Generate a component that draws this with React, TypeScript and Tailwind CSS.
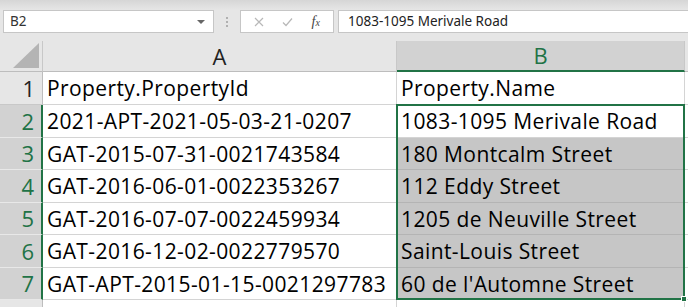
import React from "react";

const rows = [
  ["Property.PropertyId", "Property.Name"],
  ["2021-APT-2021-05-03-21-0207", "1083-1095 Merivale Road"],
  ["GAT-2015-07-31-0021743584", "180 Montcalm Street"],
  ["GAT-2016-06-01-0022353267", "112 Eddy Street"],
  ["GAT-2016-07-07-0022459934", "1205 de Neuville Street"],
  ["GAT-2016-12-02-0022779570", "Saint-Louis Street"],
  ["GAT-APT-2015-01-15-0021297783", "60 de l'Automne Street"],
];

const heights = ["h-[33px]", "h-[33px]", "h-[32px]", "h-[33px]", "h-[32px]", "h-[33px]", "h-[32px]"];

const App: React.FC = () => {
  return (
    <div className="w-[688px] h-[307px] overflow-hidden bg-[#e6e6e6] font-['Open_Sans',sans-serif] text-[#222]">
      {/* Top strip */}
      <div className="h-[10px] bg-gradient-to-b from-[#d6d6d6] to-[#e6e6e6]" />

      {/* Formula bar */}
      <div className="flex h-[23px] items-stretch">
        <div className="ml-[3px] w-[211px] bg-white border border-[#c6c6c6] flex items-center justify-between pl-[6px] pr-[6px]">
          <span className="text-[13.5px] font-['Noto_Sans',sans-serif] text-[#333]">B2</span>
          <span className="w-0 h-0 border-l-[4px] border-r-[4px] border-t-[4px] border-l-transparent border-r-transparent border-t-[#666] mr-[2px]" />
        </div>
        <div className="w-[26px] flex flex-col items-center justify-center gap-[2px]">
          <span className="w-[2px] h-[2px] bg-[#b0b0b0]" />
          <span className="w-[2px] h-[2px] bg-[#b0b0b0]" />
          <span className="w-[2px] h-[2px] bg-[#b0b0b0]" />
        </div>
        <div className="w-[94px] bg-white border border-[#c6c6c6] flex items-center justify-around px-[4px]">
          <svg width="10" height="10" viewBox="0 0 10 10">
            <path d="M1 1 L9 9 M9 1 L1 9" stroke="#b8b8b8" strokeWidth="1.2" fill="none" />
          </svg>
          <svg width="11" height="10" viewBox="0 0 11 10">
            <path d="M1 5.5 L4 8.5 L10 1.5" stroke="#b8b8b8" strokeWidth="1.2" fill="none" />
          </svg>
          <span className="font-['Liberation_Serif',serif] italic text-[14px] text-[#444] leading-none">
            f<span className="text-[10px]">x</span>
          </span>
        </div>
        <div className="ml-[4px] flex-1 bg-white border border-[#c6c6c6] border-r-0 flex items-center pl-[9px]">
          <span className="text-[13.5px] font-['Noto_Sans',sans-serif] text-[#222]">1083-1095 Merivale Road</span>
        </div>
      </div>

      <div className="h-[8px]" />

      {/* Sheet */}
      <div className="relative">
        <div className="grid grid-cols-[43px_354px_288px_3px]">
          {/* Header row */}
          <div className="h-[31px] bg-[#e6e6e6] border-r border-[#c8c8c8] border-b border-b-[#bdbdbd] relative">
            <svg className="absolute right-[3px] bottom-[3px]" width="26" height="25" viewBox="0 0 26 25">
              <polygon points="26,0 26,25 0,25" fill="#b4b4b4" />
            </svg>
          </div>
          <div className="h-[31px] bg-[#e6e6e6] border-r border-[#c8c8c8] border-b border-b-[#bdbdbd] flex items-center justify-center text-[22px] text-[#222]">
            A
          </div>
          <div className="h-[31px] bg-[#d2d2d2] border-r border-[#c8c8c8] border-b-2 border-b-[#217346] flex items-center justify-center text-[22px] text-[#217346]">
            B
          </div>
          <div className="h-[31px] bg-[#e6e6e6] border-b border-b-[#bdbdbd]" />

          {rows.map((r, i) => {
            const sel = i >= 1;
            const h = heights[i];
            return (
              <React.Fragment key={i}>
                <div
                  className={`${h} flex items-center justify-end pr-[7px] text-[22px] border-b ${
                    sel
                      ? "bg-[#d2d2d2] text-[#217346] border-b-[#e8e8e8] border-r-2 border-r-[#217346]"
                      : "bg-[#e6e6e6] text-[#222] border-b-[#c8c8c8] border-r border-r-[#bdbdbd]"
                  }`}
                >
                  {i + 1}
                </div>
                <div className={`${h} bg-white border-r border-b border-[#d4d4d4] flex items-center pl-[4px] pt-[2px] text-[21px] tracking-[0.4px] text-black whitespace-nowrap`}>
                  {r[0]}
                </div>
                <div
                  className={`${h} border-r border-b flex items-center pl-[4px] pt-[2px] text-[21px] tracking-[0.4px] text-black whitespace-nowrap ${
                    i >= 2 ? "bg-[#c6c6c6] border-[#b4b4b4]" : "bg-white border-[#d4d4d4]"
                  }`}
                >
                  {r[1]}
                </div>
                <div className={`${h} bg-white border-b border-[#d4d4d4]`} />
              </React.Fragment>
            );
          })}

          {/* Partial row 8 */}
          <div className="h-[10px] bg-[#e6e6e6] border-r border-[#bdbdbd]" />
          <div className="h-[10px] bg-white border-r border-[#d4d4d4]" />
          <div className="h-[10px] bg-white border-r border-[#d4d4d4]" />
          <div className="h-[10px] bg-white" />
        </div>

        {/* Selection outline B2:B7 */}
        <div className="absolute left-[396px] top-[63px] w-[289px] h-[196px] border-2 border-[#217346] pointer-events-none">
          <div className="absolute -right-[4px] -bottom-[4px] w-[6px] h-[6px] bg-[#217346] border border-white" />
        </div>
      </div>
    </div>
  );
};

export default App;
